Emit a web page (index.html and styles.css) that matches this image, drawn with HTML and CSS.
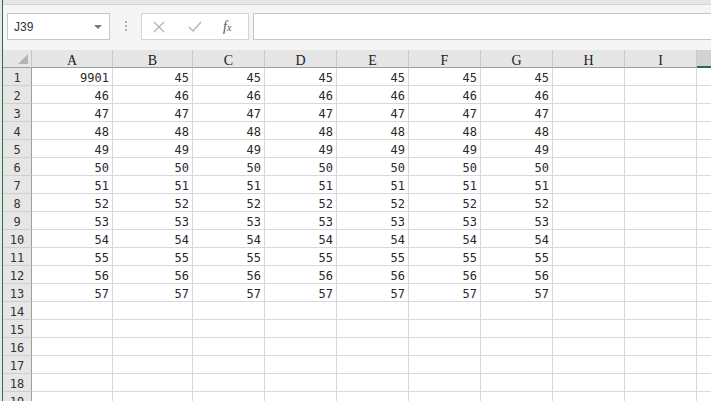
FILE: index.html
```html
<!DOCTYPE html>
<html lang="zh">
<head>
  <meta charset="UTF-8">
  <title>Book1 - Excel</title>
  <link rel="stylesheet" href="styles.css">
</head>
<body>
  <div class="app">
    <div class="topstrip"></div>

    <div class="formula-bar">
      <div class="name-box">
        <span>J39</span>
        <span class="caret"></span>
      </div>
      <div class="grip">
        <span></span><span></span><span></span>
      </div>
      <div class="fx-buttons">
        <svg class="btn" width="12" height="12" viewBox="0 0 12 12"><path d="M1 1 L11 11 M11 1 L1 11" stroke="#b4b4b4" stroke-width="1.3" fill="none"/></svg>
        <svg class="btn" width="14" height="12" viewBox="0 0 14 12"><path d="M1 6 L5 10 L13 1" stroke="#b4b4b4" stroke-width="1.4" fill="none"/></svg>
        <span class="fx">f<sub>x</sub></span>
      </div>
      <div class="formula-input"></div>
    </div>

    <div class="sheet" id="sheet">
      <div class="row head">
        <div class="cell rh corner"><span class="tri"></span></div>
        <div class="cell ch w81">A</div>
        <div class="cell ch w80">B</div>
        <div class="cell ch">C</div>
        <div class="cell ch">D</div>
        <div class="cell ch">E</div>
        <div class="cell ch">F</div>
        <div class="cell ch">G</div>
        <div class="cell ch">H</div>
        <div class="cell ch">I</div>
        <div class="cell ch sel"></div>
      </div>
    </div>
  </div>

  <script>
    const sheet = document.getElementById("sheet");
    const colClass = ["w81", "w80", "", "", "", "", "", "", "", ""];

    for (let r = 1; r <= 19; r++) {
      let html = `<div class="row"><div class="cell rh">${r}</div>`;
      for (let c = 0; c < 10; c++) {
        let val = "";
        if (r <= 13 && c < 7) {
          if (r === 1) val = c === 0 ? 9901 : 45;
          else val = 44 + r;
        }
        html += `<div class="cell num ${colClass[c]}">${val}</div>`;
      }
      html += `</div>`;
      sheet.insertAdjacentHTML("beforeend", html);
    }
  </script>
</body>
</html>
```

FILE: styles.css
```css
body {
  margin: 0;
  background: #e6e6e6;
  overflow: hidden;
}

.app {
  margin-left: 2px;
  border-left: 1px solid #217346;
  height: 401px;
  background: #fff;
  overflow: hidden;
}

.topstrip {
  height: 4px;
  background: #e6e6e6;
  border-bottom: 1px solid #d4d4d4;
}

.formula-bar {
  display: flex;
  align-items: flex-start;
  height: 45px;
  padding: 8px 0 0 4px;
  box-sizing: border-box;
  background: #f5f5f5;
}

.name-box {
  width: 103px;
  height: 27px;
  box-sizing: border-box;
  border: 1px solid #c6c6c6;
  background: #fff;
  display: flex;
  align-items: center;
  justify-content: space-between;
  padding: 0 7px 0 6px;
  font-family: "Liberation Sans", Arial, sans-serif;
  font-size: 12px;
  color: #333;
}

.caret {
  width: 0;
  height: 0;
  border-left: 4px solid transparent;
  border-right: 4px solid transparent;
  border-top: 4px solid #777;
}

.grip {
  width: 31px;
  display: flex;
  flex-direction: column;
  align-items: center;
  gap: 2px;
  padding-top: 8px;
}

.grip span {
  width: 2px;
  height: 2px;
  background: #b0b0b0;
}

.fx-buttons {
  width: 108px;
  height: 27px;
  box-sizing: border-box;
  border: 1px solid #d4d4d4;
  background: #fff;
  display: flex;
  align-items: center;
  padding-left: 11px;
  gap: 23px;
}

.fx {
  font-family: "Liberation Serif", serif;
  font-style: italic;
  font-size: 14px;
  color: #555;
  margin-left: -2px;
}

.fx sub {
  font-size: 10px;
  vertical-align: 0;
}

.formula-input {
  flex: 1;
  height: 27px;
  margin-left: 4px;
  box-sizing: border-box;
  border: 1px solid #c6c6c6;
  border-right: none;
  background: #fff;
}

.sheet {
  background: #fff;
}

.row {
  display: flex;
  height: 18px;
}

.cell {
  flex: none;
  width: 72px;
  height: 18px;
  box-sizing: border-box;
  border-right: 1px solid #d9d9d9;
  border-bottom: 1px solid #d9d9d9;
  font-family: "DejaVu Sans Mono", monospace;
  font-size: 12px;
  line-height: 17px;
  padding-top: 2px;
  color: #2a2a2a;
}

.w81 {
  width: 81px;
}

.w80 {
  width: 80px;
}

.num {
  text-align: right;
  padding-right: 3px;
}

.rh {
  width: 29px;
  background: #e6e6e6;
  border-right: 1px solid #9e9e9e;
  border-bottom-color: #cfcfcf;
  text-align: center;
  color: #333;
}

.head .cell {
  background: #e6e6e6;
  border-bottom: 1px solid #9e9e9e;
  border-right-color: #c8c8c8;
}

.ch {
  text-align: center;
  font-family: "Liberation Serif", serif;
  font-size: 14px;
  color: #222;
}

.corner {
  position: relative;
}

.tri {
  position: absolute;
  right: 3px;
  bottom: 3px;
  width: 0;
  height: 0;
  border-left: 10px solid transparent;
  border-bottom: 10px solid #b4b4b4;
}

.head .sel {
  background: #d2d2d2;
  border-bottom: 2px solid #217346;
}
```
